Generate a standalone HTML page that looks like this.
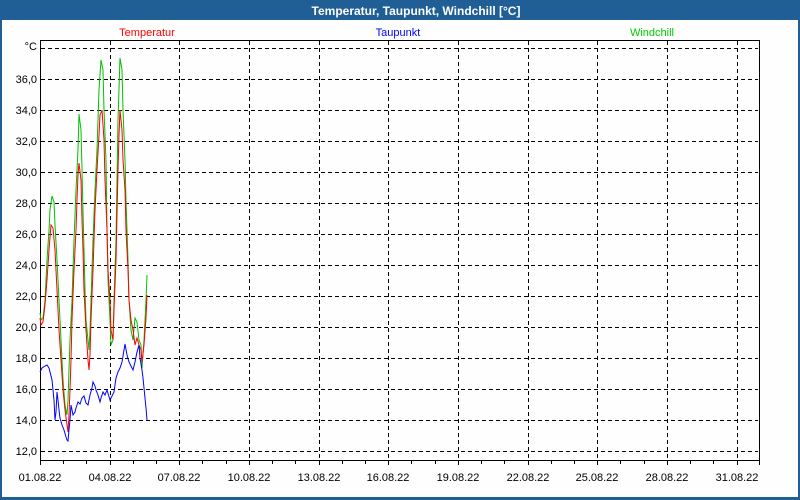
<!DOCTYPE html>
<html><head><meta charset="utf-8"><style>
html,body{margin:0;padding:0;background:#fff;}
svg{display:block;font-family:"Liberation Sans",Tahoma,sans-serif;}
</style></head><body>
<svg width="800" height="500" viewBox="0 0 800 500" xmlns="http://www.w3.org/2000/svg">
<rect x="0" y="0" width="800" height="500" fill="#1f5f96"/>
<rect x="2" y="20" width="796" height="477" fill="#fdfefd"/>
<text x="416" y="15" fill="#fff" font-size="12" font-weight="bold" text-anchor="middle">Temperatur, Taupunkt, Windchill [°C]</text>
<text x="147" y="36" fill="#ff0000" font-size="11" text-anchor="middle">Temperatur</text>
<text x="398" y="36" fill="#0000ff" font-size="11" text-anchor="middle">Taupunkt</text>
<text x="652" y="36" fill="#00cc00" font-size="11" text-anchor="middle">Windchill</text>
<g stroke="#000" stroke-width="1" stroke-dasharray="4,3" fill="none">
<path d="M41 48.5H758M41 79.5H758M41 110.5H758M41 141.5H758M41 172.5H758M41 203.5H758M41 234.5H758M41 265.5H758M41 296.5H758M41 327.5H758M41 358.5H758M41 389.5H758M41 420.5H758M41 451.5H758"/>
<path d="M110.5 41V460M179.5 41V460M249.5 41V460M319.5 41V460M388.5 41V460M458.5 41V460M528.5 41V460M597.5 41V460M667.5 41V460M737.5 41V460"/>
</g>
<g stroke="#000" stroke-width="1" fill="none">
<rect x="40.5" y="40.5" width="719" height="420"/>
<path d="M40.5 461v4M63.5 461v3M86.5 461v3M110.5 461v4M133.5 461v3M156.5 461v3M179.5 461v4M202.5 461v3M226.5 461v3M249.5 461v4M272.5 461v3M295.5 461v3M319.5 461v4M342.5 461v3M365.5 461v3M388.5 461v4M411.5 461v3M435.5 461v3M458.5 461v4M481.5 461v3M504.5 461v3M528.5 461v4M551.5 461v3M574.5 461v3M597.5 461v4M620.5 461v3M644.5 461v3M667.5 461v4M690.5 461v3M713.5 461v3M737.5 461v4M759.5 461v4"/>
</g>
<g font-size="11" fill="#000" text-anchor="end">
<text x="37" y="50">°C</text>
<text x="37" y="83">36,0</text><text x="37" y="114">34,0</text><text x="37" y="145">32,0</text>
<text x="37" y="176">30,0</text><text x="37" y="207">28,0</text><text x="37" y="238">26,0</text>
<text x="37" y="269">24,0</text><text x="37" y="300">22,0</text><text x="37" y="331">20,0</text>
<text x="37" y="362">18,0</text><text x="37" y="393">16,0</text><text x="37" y="424">14,0</text>
<text x="37" y="455">12,0</text>
</g>
<g font-size="11" fill="#000" text-anchor="middle">
<text x="40" y="481">01.08.22</text><text x="110" y="481">04.08.22</text><text x="179" y="481">07.08.22</text>
<text x="249" y="481">10.08.22</text><text x="319" y="481">13.08.22</text><text x="388" y="481">16.08.22</text>
<text x="458" y="481">19.08.22</text><text x="528" y="481">22.08.22</text><text x="597" y="481">25.08.22</text>
<text x="667" y="481">28.08.22</text><text x="737" y="481">31.08.22</text>
</g>
<polyline fill="none" stroke="#00c000" stroke-width="1" points="40,313 41,320 43,318 45,300 47,260 49,230 50,210 52,196 54,202 55,225 57,260 59,300 61,340 63,380 65,405 67,415 68,400 69,370 70,340 72,300 74,240 76,190 78,150 79,114 81,130 82,170 83,210 84,250 85,290 86,320 88,340 89,350 90,330 91,300 93,240 95,190 97,150 99,90 101,60 103,70 104,110 106,160 107,230 108,280 110,320 111,345 113,340 114,300 116,240 118,120 120,58 122,70 123,110 125,160 126,200 128,260 129,300 131,330 133,340 135,318 137,322 139,340 141,345 142,368 144,340 146,300 147,275"/>
<polyline fill="none" stroke="#ff0000" stroke-width="1" points="40,318 41,325 43,322 45,305 47,280 49,250 51,225 53,228 55,250 57,290 59,330 61,360 63,390 65,410 67,425 68,432 69,415 70,390 71,360 72,320 74,270 76,230 77,200 78,175 79,163 81,180 82,220 83,250 84,290 86,330 88,360 89,370 90,355 91,320 93,270 95,210 97,170 99,135 100,115 102,110 104,140 105,180 107,230 108,270 110,300 111,330 113,340 114,310 116,260 118,170 119,135 120,110 122,130 123,160 125,190 126,230 128,270 129,300 131,320 133,330 135,345 137,338 139,345 141,350 142,362 144,345 146,318 147,295"/>
<polyline fill="none" stroke="#0000ff" stroke-width="1" points="40,372 42,368 45,366 47,365 49,368 50,372 52,380 54,400 55,420 56,412 57,392 58,400 59,410 60,418 62,425 64,430 66,437 67,440 68,441 69,430 70,420 71,405 72,410 73,415 75,412 76,408 78,402 80,404 82,398 84,396 86,403 88,405 90,395 92,388 93,382 95,386 96,390 98,395 100,402 101,398 103,392 105,395 107,390 110,400 112,396 114,392 116,378 118,372 120,368 122,362 124,350 125,344 127,355 129,362 131,366 133,370 135,362 137,352 139,345 140,358 142,370 143,378 144,388 145,398 146,408 147,420"/>
</svg>
</body></html>
